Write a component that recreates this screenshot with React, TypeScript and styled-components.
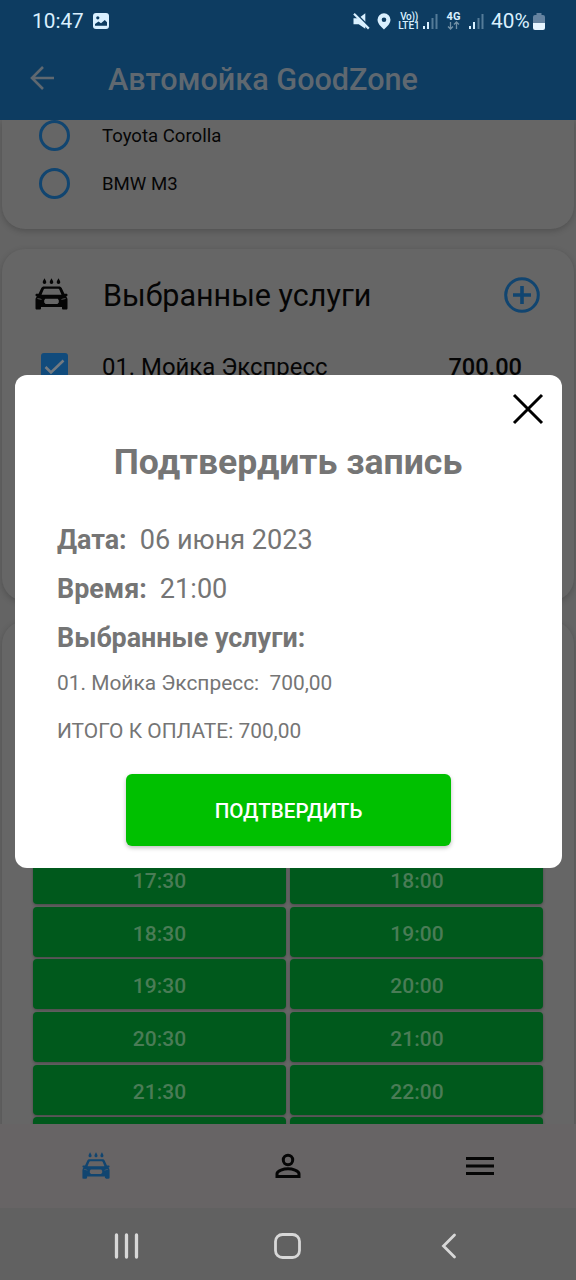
import React from "react";
import styled, { createGlobalStyle } from "styled-components";

const GlobalStyle = createGlobalStyle`
  *, *::before, *::after { box-sizing: border-box; }
  body { margin: 0; background: #666; font-family: Roboto, "Liberation Sans", sans-serif; }
  svg { display: block; flex: none; }
  button { font: inherit; border: 0; padding: 0; margin: 0; background: none; }
`;

const Screen = styled.div`
  position: relative;
  width: 576px;
  height: 1280px;
  overflow: hidden;
  display: flex;
  flex-direction: column;
  background: #666;
`;

const StatusBar = styled.div`
  height: 40px;
  flex: none;
  padding: 2px 31px 0 32px;
  display: flex;
  align-items: center;
  background: #0d3c61;
  color: #d9f0ff;
`;

const Clock = styled.span`
  font-size: 20.8px;
  line-height: 24px;
  width: 52px;
  margin-right: 9px;
  white-space: nowrap;
`;

const Spacer = styled.div<{ $width?: number }>`
  flex: ${(p) => (p.$width ? `0 0 ${p.$width}px` : "1")};
`;

const Network = styled.div<{ $width: number }>`
  width: ${(p) => p.$width}px;
  font-size: 10px;
  font-weight: 500;
  line-height: 9px;
  white-space: nowrap;
  display: flex;
  flex-direction: column;
  align-items: center;
`;

const Voice = styled.span`
  letter-spacing: -0.3px;
`;

const Generation = styled.span`
  font-size: 11px;
  font-weight: 700;
`;

const Percent = styled.span`
  font-size: 20.8px;
  line-height: 24px;
  width: 40px;
  margin: 0 2px 0 7px;
`;

const AppBar = styled.header`
  height: 80px;
  flex: none;
  display: flex;
  align-items: center;
  padding: 0 28px 4px;
  background: #0d3c61;
`;

const AppTitle = styled.h1`
  margin: 3px 0 0 52px;
  font-size: 30.6px;
  line-height: 40px;
  font-weight: 500;
  color: #5f6870;
  white-space: nowrap;
`;

const Content = styled.main`
  flex: 1;
  min-height: 0;
  overflow: hidden;
  display: flex;
  flex-direction: column;
  gap: 20px;
  padding: 0 2px;
  background: #646464;
`;

const Card = styled.section<{ $height: number; $openTop?: boolean }>`
  height: ${(p) => p.$height}px;
  flex: none;
  border-radius: ${(p) => (p.$openTop ? "0 0 23px 23px" : "23px")};
  background: #666;
  box-shadow: 0 2px 6px rgba(0, 0, 0, 0.2);
`;

const RadioRow = styled.div`
  display: flex;
  align-items: center;
  height: 48px;
  padding: 0 0 2px 37px;
  font-size: 18.6px;
  line-height: 24px;
  color: #060606;

  &:first-child {
    height: 40px;
    padding-bottom: 9px;
  }
`;

const RadioMark = styled.span`
  width: 31px;
  height: 31px;
  border: 3px solid #114570;
  border-radius: 50%;
  margin-right: 32px;
  flex: none;
`;

const RadioLabel = styled.span`
  padding-top: 1px;
`;

const SectionHead = styled.div`
  display: flex;
  align-items: center;
  height: 93px;
  padding: 0 34px 0 33px;
`;

const CarSlot = styled.span`
  padding-bottom: 4px;
`;

const SectionTitle = styled.h2`
  flex: 1;
  margin: 0 0 0 35px;
  font-size: 30.5px;
  font-weight: 400;
  color: #050505;
  white-space: nowrap;
`;

const PlusSlot = styled.span`
  padding-bottom: 2px;
`;

const ServiceRow = styled.div`
  display: flex;
  align-items: center;
  height: 50px;
  padding: 0 52px 0 39px;
  font-size: 23.9px;
  color: #050505;
`;

const CheckMark = styled.span`
  width: 27px;
  height: 28px;
  border-radius: 3px;
  background: #114b7c;
  display: flex;
  align-items: center;
  justify-content: center;
  margin: 0 34px 0 0;
`;

const ServiceName = styled.span`
  flex: 1;
`;

const Price = styled.span`
  font-size: 23.6px;
  font-weight: 500;
`;

const Slots = styled.div`
  display: grid;
  grid-template-columns: 253px 253px;
  column-gap: 4.5px;
  row-gap: 2.7px;
  padding: 233px 30.5px 0;
`;

const Slot = styled.button`
  height: 50px;
  border-radius: 4px;
  background: #00591c;
  color: #4a7c56;
  font-size: 21px;
  font-weight: 500;
  padding: 4px 0 0 1px;
  box-shadow: 0 1px 3px rgba(0, 0, 0, 0.3);
`;

const TabBar = styled.nav`
  height: 84px;
  flex: none;
  display: grid;
  grid-template-columns: repeat(3, 192px);
  place-items: center;
  background: #676465;
`;

const SystemNav = styled.div`
  height: 72px;
  flex: none;
  display: grid;
  grid-template-columns: 27px 27px 16px;
  column-gap: 134px;
  align-items: center;
  padding: 4px 0 0 113px;
  background: #616161;
`;

const BackSlot = styled.span`
  margin-left: 6px;
`;

const Dialog = styled.div`
  position: absolute;
  left: 14.5px;
  top: 375px;
  width: 547px;
  height: 493px;
  border-radius: 12px;
  background: #fff;
  color: #757575;
  display: flex;
  flex-direction: column;
  padding: 0 42.5px;
`;

const CloseRow = styled.div`
  display: flex;
  justify-content: flex-end;
  padding-top: 18px;
  margin-right: -25px;
  height: 58px;
`;

const DialogTitle = styled.h2`
  margin: 0 0 30px;
  text-align: center;
  font-size: 35.6px;
  line-height: 58px;
  font-weight: 700;
  white-space: nowrap;
`;

const Line = styled.div`
  display: flex;
  height: 49px;
  flex: none;
  line-height: 39px;
  font-size: 27.1px;
  white-space: pre;
`;

const Label = styled.span`
  font-weight: 700;
  font-size: 26.9px;
  margin-right: 13px;
`;

const Detail = styled.div`
  height: 48px;
  flex: none;
  line-height: 30px;
  font-size: 20.9px;
  white-space: pre;
`;

const Confirm = styled.button`
  align-self: center;
  width: 325px;
  height: 72px;
  flex: none;
  margin-top: 10px;
  border-radius: 6px;
  background: #00c000;
  color: #fff;
  font-size: 20.6px;
  font-weight: 500;
  padding: 2px 0 0 1px;
  box-shadow: 0 2px 4px rgba(0, 0, 0, 0.25);
`;

const CarWash = ({ size, color }: { size: number; color: string }) => (
  <svg width={size} height={(size * 32) / 33} viewBox="0 0 33 32" fill={color}>
    <path d="M9.500.300c.9 1.800 1.800 2.900 1.800 4a1.800 1.800 0 0 1-3.600 0c0-1.100.9-2.200 1.800-4Zm7 0c.9 1.800 1.800 2.900 1.800 4a1.800 1.800 0 0 1-3.600 0c0-1.100.9-2.200 1.800-4Zm7 0c.9 1.800 1.800 2.900 1.800 4a1.800 1.800 0 0 1-3.600 0c0-1.100.9-2.200 1.800-4Z" />
    <path
      fillRule="evenodd"
      d="M9 8.500h15c1.300 0 2.200.5 2.700 1.600l2.700 5.700h1.800c.9 0 1.300.5 1.300 1.200 0 .8-.5 1.200-1.400 1.400.9.900 1.400 1.900 1.400 3.200v8.600c0 .9-.5 1.400-1.300 1.400h-2.900c-.8 0-1.300-.5-1.300-1.400V29H6v1.200c0 .9-.5 1.400-1.300 1.400H1.800c-.8 0-1.300-.5-1.300-1.400v-8.600c0-1.300.5-2.300 1.400-3.200C1 18.200.5 17.800.5 17c0-.7.4-1.200 1.300-1.200h1.800l2.700-5.700c.5-1.100 1.400-1.600 2.700-1.600Zm.7 2.300c-.5 0-.8.2-1 .7L6.500 16.800h20l-2.200-5.300c-.2-.5-.5-.7-1-.7H9.700ZM2.400 20.200v.8l4.400.8c0-.8-1.500-1.400-4.400-1.600Zm28.200 0c-2.900.2-4.400.8-4.400 1.600l4.400-.8v-.8ZM10.300 20.700 9.200 22.200v2.300l1.400 1.400h11.800l1.400-1.400v-2.300l-1.100-1.500H10.300Z"
    />
  </svg>
);

const Signal = () => (
  <svg width="15" height="17" viewBox="0 0 15 17" fill="#d9f0ff">
    <rect x="0" y="13" width="2" height="3" />
    <rect x="4" y="9" width="2" height="7" />
    <rect x="8.500" y="5" width="2" height="11" opacity=".35" />
    <rect x="12.500" y="1" width="2" height="15" opacity=".35" />
  </svg>
);

const slots = ["17:30", "18:00", "18:30", "19:00", "19:30", "20:00", "20:30", "21:00", "21:30", "22:00", "", ""];

export default function App() {
  return (
    <>
      <GlobalStyle />
      <Screen>
        <StatusBar>
          <Clock>10:47</Clock>
          <svg width="16" height="16" viewBox="0 0 16 16">
            <rect width="16" height="16" rx="3" fill="#d9f0ff" />
            <path d="M2 12.800V11l3.500-2.500 2.500 1.800L11.800 7 14 9.200v3.600Z" fill="#0d3c61" />
            <circle cx="4.800" cy="4.800" r="1.600" fill="#0d3c61" />
          </svg>
          <Spacer />
          <svg width="17" height="17" viewBox="0 0 17 17">
            <path d="M.5 5.300h5.200L12.300.3v15.400l-6.600-4.500H.5Z" fill="#d9f0ff" />
            <path d="m2.500 0 14 14" stroke="#0d3c61" strokeWidth="1.600" />
            <path d="m1 .8 14.800 14.800" stroke="#d9f0ff" strokeWidth="2.200" />
          </svg>
          <Spacer $width={7} />
          <svg width="14" height="17" viewBox="0 0 14 17">
            <path fillRule="evenodd" d="M7 .3A6.500 6.500 0 0 0 .5 6.800C.5 11.500 7 16.500 7 16.500s6.500-5 6.500-9.700A6.500 6.500 0 0 0 7 .3Zm0 4.200a2.300 2.300 0 1 1 0 4.600 2.300 2.300 0 0 1 0-4.600Z" fill="#d9f0ff" />
          </svg>
          <Spacer $width={6} />
          <Network $width={24}>
            <Voice>Vo))</Voice>
            <span>LTE1</span>
          </Network>
          <Spacer $width={2} />
          <Signal />
          <Spacer $width={7} />
          <Network $width={17}>
            <Generation>4G</Generation>
            <svg width="13" height="9" viewBox="0 0 13 9" fill="none" stroke="#7290a5" strokeWidth="1.300">
              <path d="M3.500 1v7M1 5.500 3.500 8 6 5.500M9.500 8V1M7 3.500 9.500 1 12 3.500" />
            </svg>
          </Network>
          <Spacer $width={7} />
          <Signal />
          <Percent>40%</Percent>
          <svg width="12" height="17" viewBox="0 0 12 17">
            <path d="M3.500 0h5v2H10a2 2 0 0 1 2 2v6H0V4a2 2 0 0 1 2-2h1.500Z" fill="#6583a0" />
            <path d="M0 10h12v5a2 2 0 0 1-2 2H2a2 2 0 0 1-2-2Z" fill="#e6f5ff" />
          </svg>
        </StatusBar>
        <AppBar>
          <svg width="28" height="26" viewBox="0 0 28 26" fill="none" stroke="#5f6870" strokeWidth="2.600">
            <path d="M26 13H4M15 2 4 13l11 11" />
          </svg>
          <AppTitle>Автомойка GoodZone</AppTitle>
        </AppBar>
        <Content>
          <Card $height={109} $openTop>
            <RadioRow><RadioMark /><RadioLabel>Toyota Corolla</RadioLabel></RadioRow>
            <RadioRow><RadioMark /><RadioLabel>BMW M3</RadioLabel></RadioRow>
          </Card>
          <Card $height={352}>
            <SectionHead>
              <CarSlot>
                <CarWash size={33} color="#050505" />
              </CarSlot>
              <SectionTitle>Выбранные услуги</SectionTitle>
              <PlusSlot>
                <svg width="36" height="36" viewBox="0 0 36 36" fill="none" stroke="#114570">
                  <circle cx="18" cy="18" r="16.300" strokeWidth="3" />
                  <path d="M18 9v18M9 18h18" strokeWidth="3.600" />
                </svg>
              </PlusSlot>
            </SectionHead>
            <ServiceRow>
              <CheckMark>
                <svg width="21" height="16" viewBox="0 0 21 16" fill="none" stroke="#747a80" strokeWidth="2.600">
                  <path d="m1.500 8 5.500 5.500L19.500 1.500" />
                </svg>
              </CheckMark>
              <ServiceName>01. Мойка Экспресс</ServiceName>
              <Price>700.00</Price>
            </ServiceRow>
          </Card>
          <Card $height={600}>
            <Slots>
              {slots.map((time, i) => (
                <Slot key={i}>{time}</Slot>
              ))}
            </Slots>
          </Card>
        </Content>
        <TabBar>
          <CarWash size={28} color="#114570" />
          <svg width="26" height="26" viewBox="0 0 26 26" fill="none" stroke="#050505" strokeWidth="3">
            <circle cx="13" cy="7" r="4.700" />
            <path d="M2 23.500v-2.700c0-3.300 7-5 11-5s11 1.700 11 5v2.700Z" />
          </svg>
          <svg width="28" height="20" viewBox="0 0 28 20" fill="#050505">
            <path d="M0 1h28v3H0Zm0 7.500h28v3H0ZM0 16h28v3H0Z" />
          </svg>
        </TabBar>
        <SystemNav>
          <svg width="27" height="26" viewBox="0 0 27 26" stroke="#d8d8d8" strokeWidth="3.300" strokeLinecap="round">
            <path d="M3.500 2v22M13.500 2v22M23.500 2v22" />
          </svg>
          <svg width="27" height="26" viewBox="0 0 27 26" fill="none" stroke="#d8d8d8" strokeWidth="2.800">
            <rect x="1.500" y="1.500" width="24" height="23" rx="7" />
          </svg>
          <BackSlot>
            <svg width="16" height="26" viewBox="0 0 16 26" fill="none" stroke="#d8d8d8" strokeWidth="2.800" strokeLinecap="round">
              <path d="M13.500 2 2.500 13l11 11" />
            </svg>
          </BackSlot>
        </SystemNav>
        <Dialog>
          <CloseRow>
            <svg width="32" height="32" viewBox="0 0 32 32" stroke="#000" strokeWidth="3">
              <path d="m2 2 28 28M30 2 2 30" />
            </svg>
          </CloseRow>
          <DialogTitle>Подтвердить запись</DialogTitle>
          <Line><Label>Дата:</Label>06 июня 2023</Line>
          <Line><Label>Время:</Label>21:00</Line>
          <Line><Label>Выбранные услуги:</Label></Line>
          <Detail>{"01. Мойка Экспресс:  700,00"}</Detail>
          <Detail>ИТОГО К ОПЛАТЕ: 700,00</Detail>
          <Confirm>ПОДТВЕРДИТЬ</Confirm>
        </Dialog>
      </Screen>
    </>
  );
}
